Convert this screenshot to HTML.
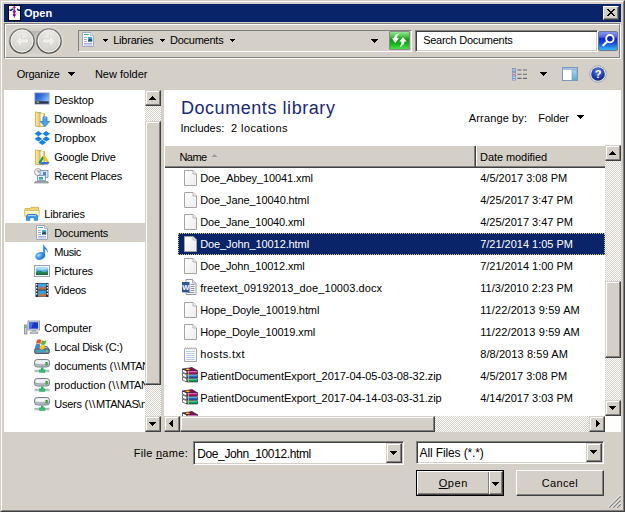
<!DOCTYPE html>
<html><head><meta charset="utf-8"><title>Open</title>
<style>
*{box-sizing:border-box;margin:0;padding:0}
html,body{width:625px;height:512px;overflow:hidden;background:#d4d0c8}
body{font-family:"Liberation Sans",sans-serif;font-size:11px;color:#000;position:relative}
.a{position:absolute}
.t{position:absolute;white-space:nowrap;line-height:13px;font-size:11px}
.btn{position:absolute;background:#d4d0c8;border:1px solid;border-color:#fff #404040 #404040 #fff;box-shadow:inset -1px -1px 0 #808080}
.sb{position:absolute;background:#d4d0c8;border:1px solid;border-color:#d4d0c8 #404040 #404040 #d4d0c8;box-shadow:inset -1px -1px 0 #808080, inset 1px 1px 0 #fff}
.sunk{position:absolute;border:1px solid;border-color:#808080 #fff #fff #808080;box-shadow:inset 1px 1px 0 #404040, inset -1px -1px 0 #d4d0c8}
.sunk1{position:absolute;border:1px solid;border-color:#808080 #fff #fff #808080}
.dith{position:absolute;background-color:#fff;background-image:conic-gradient(#d4d0c8 25%,#fff 0 50%,#d4d0c8 0 75%,#fff 0);background-size:2px 2px}
.ad{position:absolute;width:0;height:0;border-style:solid;border-color:#000 transparent transparent transparent}
.au{position:absolute;width:0;height:0;border-style:solid;border-color:transparent transparent #000 transparent}
.al{position:absolute;width:0;height:0;border-style:solid;border-color:transparent #000 transparent transparent}
.ar{position:absolute;width:0;height:0;border-style:solid;border-color:transparent transparent transparent #000}
svg{position:absolute;overflow:visible}
</style></head><body>
<div class="a" style="left:0px;top:0px;width:625px;height:512px;border:1px solid;border-color:#d4d0c8 #404040 #404040 #d4d0c8"></div>
<div class="a" style="left:1px;top:1px;width:623px;height:510px;border:1px solid;border-color:#fff #808080 #808080 #fff"></div>
<div class="a" style="left:4px;top:4px;width:617px;height:18px;background:#0a246a"></div>
<div class="t" style="left:24px;top:6px;color:#fff;font-weight:bold;font-size:11px;line-height:14px">Open</div>
<div class="a" style="left:8px;top:5px;width:13px;height:16px;background:#fff;border:1px solid #000;border-left-width:1.5px"></div>
<svg style="left:8px;top:5px" width="13" height="16" viewBox="0 0 13 16"><path d="M1.5 5.200h1.500l1.200-1h1.300M12 5.200h-1.500l-1.200-1H9" stroke="#0a246a" stroke-width="1.500" fill="none"/><path d="M6.300 1v11.500M4.800 2.300h3" stroke="#a000a0" stroke-width="1"/><circle cx="6.300" cy="6.600" r="1.500" fill="#a000a0"/><circle cx="6.300" cy="9.700" r="1.500" fill="#a000a0"/></svg>
<div class="btn" style="left:603px;top:6px;width:16px;height:14px;"></div>
<svg style="left:607px;top:9px" width="8" height="7" viewBox="0 0 8 7" shape-rendering="crispEdges" fill="#000"><rect x="0" y="0" width="2" height="1"/><rect x="6" y="0" width="2" height="1"/><rect x="1" y="1" width="2" height="1"/><rect x="5" y="1" width="2" height="1"/><rect x="2" y="2" width="4" height="1"/><rect x="3" y="3" width="2" height="1"/><rect x="2" y="4" width="4" height="1"/><rect x="1" y="5" width="2" height="1"/><rect x="5" y="5" width="2" height="1"/><rect x="0" y="6" width="2" height="1"/><rect x="6" y="6" width="2" height="1"/></svg>
<div class="a" style="left:4px;top:23px;width:617px;height:36px;border:1px solid;border-color:#808080 #fff #fff #808080"></div>
<div class="a" style="left:5px;top:24px;width:615px;height:34px;border:1px solid;border-color:#fff #808080 #808080 #fff"></div>
<svg style="left:8px;top:28px" width="54" height="26" viewBox="0 0 54 26"><defs><linearGradient id="pl" x1="0" y1="0" x2="0" y2="1"><stop offset="0" stop-color="#b8b6b0"/><stop offset="0.400" stop-color="#cac8c2"/><stop offset="1" stop-color="#d2cec6"/></linearGradient></defs><rect x="13" y="3" width="28" height="20" fill="url(#pl)"/><rect x="-1" y="-1" width="56" height="28" rx="14" fill="none" stroke="#e2e0da" stroke-width="1"/></svg>
<svg style="left:8.7px;top:28.2px" width="26" height="26" viewBox="0 0 26 26"><defs><radialGradient id="g1" cx="50%" cy="30%" r="70%"><stop offset="0" stop-color="#eeedea"/><stop offset="0.600" stop-color="#dddbd6"/><stop offset="1" stop-color="#cdcbc5"/></radialGradient><linearGradient id="r1" x1="0" y1="0" x2="0" y2="1"><stop offset="0" stop-color="#808080"/><stop offset="1" stop-color="#4c4c4c"/></linearGradient></defs><circle cx="13" cy="13" r="12.100" fill="url(#g1)" stroke="url(#r1)" stroke-width="1.350"/><circle cx="13" cy="13" r="10.900" fill="none" stroke="#f6f6f4" stroke-width="1" opacity="0.800"/><path d="M6.500 13l6-6v3.800h7v4.400h-7v3.800z" fill="#f0efec" stroke="#d0cec8" stroke-width="0.700"/></svg>
<svg style="left:36.3px;top:28.2px" width="26" height="26" viewBox="0 0 26 26"><defs><radialGradient id="g2" cx="50%" cy="30%" r="70%"><stop offset="0" stop-color="#eeedea"/><stop offset="0.600" stop-color="#dddbd6"/><stop offset="1" stop-color="#cdcbc5"/></radialGradient><linearGradient id="r2" x1="0" y1="0" x2="0" y2="1"><stop offset="0" stop-color="#808080"/><stop offset="1" stop-color="#4c4c4c"/></linearGradient></defs><circle cx="13" cy="13" r="12.100" fill="url(#g2)" stroke="url(#r2)" stroke-width="1.350"/><circle cx="13" cy="13" r="10.900" fill="none" stroke="#f6f6f4" stroke-width="1" opacity="0.800"/><path d="M19.500 13l-6-6v3.800h-7v4.400h7v3.800z" fill="#f0efec" stroke="#d0cec8" stroke-width="0.700"/></svg>
<div class="sunk1" style="left:78px;top:30px;width:334px;height:22px;"></div>
<svg style="left:82px;top:32px" width="12" height="15" viewBox="0 0 12 15"><path d="M0.500 0.500h8l3 3v11h-11z" fill="#fff" stroke="#9aa0b4" stroke-width="0.900"/><path d="M8.500 0.500v3h3" fill="#eceef4" stroke="#9aa0b4" stroke-width="0.700"/><path d="M2 2.500h5" stroke="#48a898" stroke-width="1"/><path d="M2 5.500h3M2 7.500h3M2 9.500h3M2 11.500h8M2 13h8" stroke="#8498e4" stroke-width="0.800"/><rect x="6" y="5" width="4.200" height="4.500" fill="#4c9ce0"/><path d="M6 8l2-1.200 2.200 0.800v1.900h-4.200z" fill="#245c50"/></svg>
<svg style="left:103px;top:39px" width="5" height="3" viewBox="0 0 5 3" shape-rendering="crispEdges" fill="#000"><rect x="0" y="0" width="5" height="1"/><rect x="1" y="1" width="3" height="1"/><rect x="2" y="2" width="1" height="1"/></svg>
<div class="t" style="left:113.2px;top:34px;letter-spacing:-0.221px;">Libraries</div>
<svg style="left:160px;top:39px" width="5" height="3" viewBox="0 0 5 3" shape-rendering="crispEdges" fill="#000"><rect x="0" y="0" width="5" height="1"/><rect x="1" y="1" width="3" height="1"/><rect x="2" y="2" width="1" height="1"/></svg>
<div class="t" style="left:170.0px;top:34px;letter-spacing:-0.249px;">Documents</div>
<svg style="left:230px;top:39px" width="5" height="3" viewBox="0 0 5 3" shape-rendering="crispEdges" fill="#000"><rect x="0" y="0" width="5" height="1"/><rect x="1" y="1" width="3" height="1"/><rect x="2" y="2" width="1" height="1"/></svg>
<svg style="left:371px;top:39px" width="7" height="4" viewBox="0 0 7 4" shape-rendering="crispEdges" fill="#000"><rect x="0" y="0" width="7" height="1"/><rect x="1" y="1" width="5" height="1"/><rect x="2" y="2" width="3" height="1"/><rect x="3" y="3" width="1" height="1"/></svg>
<svg style="left:389px;top:31px" width="21" height="19" viewBox="0 0 21 19"><defs><linearGradient id="gr" x1="0" y1="0" x2="0" y2="1"><stop offset="0" stop-color="#90e890"/><stop offset="0.300" stop-color="#3cbc3c"/><stop offset="0.450" stop-color="#0c9a14"/><stop offset="0.700" stop-color="#18b41c"/><stop offset="1" stop-color="#48e048"/></linearGradient></defs><rect x="0" y="0" width="21" height="19" rx="1.500" fill="#848c88"/><rect x="1" y="1" width="19" height="17" rx="0.800" fill="url(#gr)"/><path d="M9.400 2.200Q5.400 3.600 4.900 7.300L2.900 7.300 6.300 12 10.100 7.300 7.900 7.300Q8 4.600 9.800 3z" fill="#fff"/><path d="M14 6.300L17.700 10.600 15.500 10.600Q15.400 14.300 10.700 16.300 12.600 13.500 12.400 10.600L10.200 10.600z" fill="#f8f8f2"/></svg>
<div class="sunk" style="left:415px;top:30px;width:183px;height:22px;background:#fff"></div>
<div class="t" style="left:423.2px;top:34px;letter-spacing:-0.265px;">Search Documents</div>
<svg style="left:598px;top:31px" width="20" height="20" viewBox="0 0 20 20"><defs><linearGradient id="gs" x1="0" y1="0" x2="0" y2="1"><stop offset="0" stop-color="#8c9cf4"/><stop offset="0.3" stop-color="#5060e8"/><stop offset="0.36" stop-color="#1028c8"/><stop offset="0.6" stop-color="#1448d8"/><stop offset="1" stop-color="#38c0f8"/></linearGradient></defs><rect x="0.5" y="0.5" width="19" height="19" rx="1.5" fill="url(#gs)" stroke="#707890"/><circle cx="11.900" cy="7.700" r="3.700" fill="#0a20c0" stroke="#fff" stroke-width="1.900"/><path d="M9.200 10.400L5.300 14.300" stroke="#fff" stroke-width="2.100" stroke-linecap="round"/></svg>
<div class="t" style="left:16.7px;top:68px;letter-spacing:-0.218px;">Organize</div>
<svg style="left:68px;top:72px" width="7" height="4" viewBox="0 0 7 4" shape-rendering="crispEdges" fill="#000"><rect x="0" y="0" width="7" height="1"/><rect x="1" y="1" width="5" height="1"/><rect x="2" y="2" width="3" height="1"/><rect x="3" y="3" width="1" height="1"/></svg>
<div class="t" style="left:94.9px;top:68px;letter-spacing:0.002px;">New folder</div>
<svg style="left:511.5px;top:67.5px" width="16" height="13" viewBox="0 0 16 13"><g fill="#fff" stroke="#7890c0" stroke-width="0.800"><rect x="0.400" y="0.400" width="3.200" height="3.200"/><rect x="0.400" y="4.600" width="3.200" height="3.200"/><rect x="0.400" y="8.800" width="3.200" height="3.200"/></g><rect x="1.300" y="5.500" width="1.400" height="1.400" fill="#e02020"/><rect x="1.300" y="1.300" width="1.400" height="1.400" fill="#3878d8"/><rect x="1.300" y="9.700" width="1.400" height="1.400" fill="#3878d8"/><path d="M5.500 2h4M11 2h4M5.500 6.200h4M11 6.200h4M5.500 10.400h4M11 10.400h4" stroke="#686870" stroke-width="1.100"/></svg>
<svg style="left:540px;top:72px" width="7" height="4" viewBox="0 0 7 4" shape-rendering="crispEdges" fill="#000"><rect x="0" y="0" width="7" height="1"/><rect x="1" y="1" width="5" height="1"/><rect x="2" y="2" width="3" height="1"/><rect x="3" y="3" width="1" height="1"/></svg>
<svg style="left:562px;top:67px" width="16" height="14" viewBox="0 0 16 14"><defs><linearGradient id="gp" x1="0" y1="0" x2="0" y2="1"><stop offset="0" stop-color="#a8dcec"/><stop offset="1" stop-color="#58a8c8"/></linearGradient></defs><rect x="0.5" y="0.5" width="15" height="13" fill="#fff" stroke="#7c98bc"/><rect x="1" y="1" width="14" height="2" fill="#a8c0e0"/><rect x="10" y="3" width="5" height="10.5" fill="url(#gp)" stroke="#7c98bc" stroke-width="0.6"/></svg>
<svg style="left:589px;top:65px" width="18" height="18" viewBox="0 0 18 18"><defs><radialGradient id="gh" cx="50%" cy="30%" r="70%"><stop offset="0" stop-color="#6888e0"/><stop offset="0.6" stop-color="#2040b0"/><stop offset="1" stop-color="#102880"/></radialGradient></defs><circle cx="9" cy="9" r="8.3" fill="#e8e8e8" stroke="#9098a8" stroke-width="0.8"/><circle cx="9" cy="9" r="6.8" fill="url(#gh)"/><text x="9" y="13" font-family="Liberation Sans,sans-serif" font-weight="bold" font-size="11" fill="#fff" text-anchor="middle">?</text></svg>
<div class="a" style="left:4px;top:90px;width:141px;height:342px;background:#fff"></div>
<div class="dith" style="left:145px;top:90px;width:16px;height:342px;"></div>
<div class="sb" style="left:145px;top:90px;width:16px;height:16px;"></div>
<svg style="left:149px;top:96px" width="7" height="4" viewBox="0 0 7 4" shape-rendering="crispEdges" fill="#000"><rect x="3" y="0" width="1" height="1"/><rect x="2" y="1" width="3" height="1"/><rect x="1" y="2" width="5" height="1"/><rect x="0" y="3" width="7" height="1"/></svg>
<div class="sb" style="left:145px;top:121px;width:16px;height:264px;"></div>
<div class="sb" style="left:145px;top:416px;width:16px;height:16px;"></div>
<svg style="left:149px;top:422px" width="7" height="4" viewBox="0 0 7 4" shape-rendering="crispEdges" fill="#000"><rect x="0" y="0" width="7" height="1"/><rect x="1" y="1" width="5" height="1"/><rect x="2" y="2" width="3" height="1"/><rect x="3" y="3" width="1" height="1"/></svg>
<div class="a" style="left:5px;top:223px;width:140px;height:19px;background:#d4d0c8"></div>
<svg style="left:34px;top:92px" width="16" height="16" viewBox="0 0 16 16"><defs><linearGradient id="gd" x1="0" y1="0" x2="1" y2="0.600"><stop offset="0" stop-color="#1c48c8"/><stop offset="0.500" stop-color="#3c78e0"/><stop offset="1" stop-color="#8cc0f4"/></linearGradient></defs><rect x="0.500" y="0.500" width="15" height="12" fill="#8c9cbc"/><rect x="1.300" y="1.300" width="13.400" height="10.400" fill="url(#gd)"/><rect x="1.300" y="9.300" width="13.400" height="2.400" fill="#2c3448"/><rect x="2" y="8.300" width="1.500" height="1.500" fill="#e84830"/><rect x="3.300" y="8.800" width="1.300" height="1.300" fill="#48c048"/><rect x="2.300" y="9.800" width="1.300" height="1.200" fill="#3888f0"/><rect x="3.500" y="10" width="1.200" height="1.100" fill="#f8d030"/></svg>
<div class="t" style="left:54.3px;top:94px;letter-spacing:-0.137px;">Desktop</div>
<svg style="left:34px;top:111px" width="16" height="16" viewBox="0 0 16 16"><defs><linearGradient id="gf1" x1="0" y1="0" x2="1" y2="0"><stop offset="0" stop-color="#f8eaa8"/><stop offset="1" stop-color="#e8c860"/></linearGradient></defs><path d="M2 1.500h5l0.800 1h2.700v13h-8.500z" fill="#dcb850" stroke="#c0a040" stroke-width="0.700"/><path d="M6 2.500l3.500-0.500v12.500l-3.500 1z" fill="#fffbe4" stroke="#d8c890" stroke-width="0.400"/><path d="M1.500 0.800l4.500 1.200v14l-4.500-0.800z" fill="url(#gf1)" stroke="#c8a848" stroke-width="0.700"/><path d="M9 6h4v4.500h2.600l-4.600 5.200-4.600-5.200h2.600z" fill="#48a4ec" stroke="#2478c8" stroke-width="0.800" stroke-linejoin="round"/><path d="M9.800 6.800h2.400" stroke="#a8d8f8" stroke-width="0.800"/></svg>
<div class="t" style="left:54.3px;top:113px;letter-spacing:-0.202px;">Downloads</div>
<svg style="left:34px;top:130px" width="16" height="16" viewBox="0 0 16 16"><g fill="#1581e6" transform="translate(0,0.800)"><path d="M4.400 0.300l3.900 2.600-3.900 2.600-3.900-2.600z"/><path d="M12.200 0.300l3.900 2.600-3.900 2.600-3.900-2.600z"/><path d="M4.400 5.500l3.900 2.600-3.900 2.600-3.900-2.600z"/><path d="M12.200 5.500l3.900 2.600-3.900 2.600-3.900-2.600z"/><path d="M8.300 9l3.900 2.600-3.900 2.600-3.900-2.600z"/></g></svg>
<div class="t" style="left:54.3px;top:132px;letter-spacing:-0.040px;">Dropbox</div>
<svg style="left:34px;top:149px" width="16" height="16" viewBox="0 0 16 16"><defs><linearGradient id="gf2" x1="0" y1="0" x2="1" y2="0"><stop offset="0" stop-color="#f8eaa8"/><stop offset="1" stop-color="#e8c860"/></linearGradient></defs><path d="M2 1.500h5l0.800 1h2.700v13h-8.500z" fill="#dcb850" stroke="#c0a040" stroke-width="0.700"/><path d="M6 2.500l3.500-0.500v12.500l-3.500 1z" fill="#fffbe4" stroke="#d8c890" stroke-width="0.400"/><path d="M1.500 0.800l4.500 1.200v14l-4.500-0.800z" fill="url(#gf2)" stroke="#c8a848" stroke-width="0.700"/><path d="M8.500 7l-4 6.500 1.500 2 4-6.500z" fill="#1e9a50"/><path d="M8.500 7h3l4 6.500h-3z" fill="#f8c820"/><path d="M6 15.500l1.500-2.500h8l-1.500 2.500z" fill="#3a70e0"/></svg>
<div class="t" style="left:54.3px;top:151px;letter-spacing:-0.234px;">Google Drive</div>
<svg style="left:34px;top:168px" width="16" height="16" viewBox="0 0 16 16"><circle cx="4" cy="4" r="3.500" fill="#f4f4f4" stroke="#8890a0" stroke-width="0.8"/><path d="M4 2v2h1.500" stroke="#506080" stroke-width="0.7" fill="none"/><rect x="6" y="2.500" width="8" height="7" fill="#d8e4f4" stroke="#7888a8" stroke-width="0.8"/><rect x="9" y="4" width="3" height="3" fill="#4888d8"/><rect x="3.500" y="7.500" width="8" height="5" fill="#e8eef8" stroke="#7888a8" stroke-width="0.8"/><rect x="5" y="9" width="4" height="2.500" fill="#38a8a0"/><path d="M1.500 13.500h12l1 1.500h-14z" fill="#a8b0b8" stroke="#70787f" stroke-width="0.6"/></svg>
<div class="t" style="left:54.3px;top:170px;letter-spacing:-0.249px;">Recent Places</div>
<svg style="left:24px;top:206px" width="16" height="16" viewBox="0 0 16 16"><path d="M1 2.500h5l1-1.200h7.500v8h-13.500z" fill="#f0d47c" stroke="#d0ac48" stroke-width="0.800"/><path d="M0.500 4.500h15l-0.500 6h-14z" fill="#fbf0b8" stroke="#d8b850" stroke-width="0.800"/><path d="M1.500 5.500h13" stroke="#fffce8" stroke-width="1"/><path d="M2.500 14.300v-3.800q0-2 2-2h7q2 0 2 2v3.800h-3.200v-2.600h-4.600v2.600z" fill="#3c9ce8" stroke="#2078c0" stroke-width="0.800"/><path d="M4 9.500h8" stroke="#a0d4f8" stroke-width="1"/></svg>
<div class="t" style="left:44.3px;top:208px;letter-spacing:-0.188px;">Libraries</div>
<svg style="left:36px;top:225px" width="16" height="16" viewBox="0 0 16 16"><path d="M0.500 0.500h8l3 3v11h-11z" fill="#fff" stroke="#9aa0b4" stroke-width="0.900"/><path d="M8.500 0.500v3h3" fill="#eceef4" stroke="#9aa0b4" stroke-width="0.700"/><path d="M2 2.500h5" stroke="#48a898" stroke-width="1"/><path d="M2 5.500h3M2 7.500h3M2 9.500h3M2 11.500h8M2 13h8" stroke="#8498e4" stroke-width="0.800"/><rect x="6" y="5" width="4.200" height="4.500" fill="#4c9ce0"/><path d="M6 8l2-1.200 2.200 0.800v1.900h-4.200z" fill="#245c50"/></svg>
<div class="t" style="left:54.3px;top:227px;letter-spacing:-0.205px;">Documents</div>
<svg style="left:34px;top:244px" width="16" height="16" viewBox="0 0 16 16"><defs><radialGradient id="gm" cx="35%" cy="35%" r="70%"><stop offset="0" stop-color="#b8e0ff"/><stop offset="0.500" stop-color="#3c9cf0"/><stop offset="1" stop-color="#1868c8"/></radialGradient></defs><path d="M9.200 0.500v11.500h1.700v-7q2 1 2.300 2.500t-0.700 3q2-2.500 1-4.500t-2.600-3.200q-1-0.900-1-2.300z" fill="#2484e0"/><ellipse cx="6.200" cy="12" rx="4.600" ry="3.400" fill="url(#gm)" stroke="#1c6cc4" stroke-width="0.500" transform="rotate(-15 6.200 12)"/></svg>
<div class="t" style="left:54.3px;top:246px;letter-spacing:-0.427px;">Music</div>
<svg style="left:34px;top:263px" width="16" height="16" viewBox="0 0 16 16"><rect x="0.500" y="2.500" width="15" height="11" fill="#f8f8f8" stroke="#9098a0" stroke-width="0.9"/><rect x="2" y="4" width="12" height="8" fill="#58b0e8"/><path d="M2 9q3-2 6-0.500t6-1v4.500h-12z" fill="#2a8858"/><path d="M2 10.500h12v1.500h-12z" fill="#1a6848"/><path d="M2 4h12v2q-6 2-12 0z" fill="#a8dcf8"/></svg>
<div class="t" style="left:54.3px;top:265px;letter-spacing:-0.131px;">Pictures</div>
<svg style="left:34px;top:282px" width="16" height="16" viewBox="0 0 16 16"><rect x="1.500" y="1" width="13" height="14" fill="#303038"/><rect x="4" y="1.500" width="8" height="6" fill="#48a0e0"/><rect x="4" y="8.500" width="8" height="6" fill="#38a0d8"/><path d="M4 7.500l3-3 2 2 3-2.500v3.500z" fill="#c86030"/><path d="M4 14.500l3-3 2 1.500 3-2v3.500z" fill="#d07038"/><g fill="#e8f8f0"><rect x="2" y="2" width="1.300" height="1.500"/><rect x="2" y="5" width="1.300" height="1.500"/><rect x="2" y="8" width="1.300" height="1.500"/><rect x="2" y="11" width="1.300" height="1.500"/><rect x="12.700" y="2" width="1.300" height="1.500"/><rect x="12.700" y="5" width="1.300" height="1.500"/><rect x="12.700" y="8" width="1.300" height="1.500"/><rect x="12.700" y="11" width="1.300" height="1.500"/></g></svg>
<div class="t" style="left:54.3px;top:284px;letter-spacing:-0.290px;">Videos</div>
<svg style="left:24px;top:320px" width="16" height="16" viewBox="0 0 16 16"><rect x="0.500" y="5" width="2.500" height="9" fill="#c8ccd0" stroke="#70787f" stroke-width="0.700"/><rect x="1" y="6.500" width="1.200" height="1.500" fill="#40c040"/><rect x="4" y="1" width="11.500" height="9" fill="#e8eaf0" stroke="#8088a0" stroke-width="0.800"/><rect x="5.200" y="2.200" width="9" height="6.500" fill="#1838c0"/><path d="M5.200 2.200h4l-2 6.500h-2z" fill="#4870e8"/><path d="M8 10.500h4v1.500h2v1.500h-8v-1.500h2z" fill="#c0c4c8" stroke="#808890" stroke-width="0.500"/></svg>
<div class="t" style="left:44.3px;top:322px;letter-spacing:-0.087px;">Computer</div>
<svg style="left:34px;top:339px" width="16" height="16" viewBox="0 0 16 16"><path d="M1 10l2-2.500h10l2 2.500v4h-14z" fill="#a8b4c0" stroke="#4c5864" stroke-width="0.800"/><rect x="0.800" y="9.800" width="14.400" height="4.700" rx="1" fill="#6c88a4" stroke="#3c4c5c" stroke-width="0.800"/><rect x="2.500" y="11.300" width="8" height="1.600" fill="#38a8d0"/><rect x="12" y="11.300" width="1.700" height="1.600" fill="#58e858"/><path d="M3 1q2.200-1.400 4.400 0l-1 4q-2.200-1.400-4.400 0z" fill="#e85028"/><path d="M7.900 1.300q2.200 1.400 4.400 0l-1 4q-2.200 1.400-4.400 0z" fill="#58b830"/><path d="M1.800 5.500q2.200-1.400 4.400 0l-1 4q-2.200-1.400-4.400 0z" fill="#3888e0"/><path d="M6.700 5.800q2.200 1.400 4.400 0l-1 4q-2.200 1.400-4.400 0z" fill="#f8c820"/></svg>
<div class="t" style="left:54.3px;top:341px;letter-spacing:-0.248px;">Local Disk (C:)</div>
<div class="a" style="left:4px;top:355px;width:141px;height:60px;overflow:hidden">
<div class="t" style="left:50.3px;top:5px;letter-spacing:-0.157px;">documents</div>
<div class="t" style="left:105.4px;top:5px;letter-spacing:0.606px;">(\\</div>
<div class="t" style="left:117.0px;top:5px;letter-spacing:-0.455px;">MTANAS</div>
<div class="t" style="left:159.5px;top:5px;letter-spacing:0.128px;">)</div>
<div class="t" style="left:50.3px;top:24px;letter-spacing:-0.018px;">production</div>
<div class="t" style="left:103.9px;top:24px;letter-spacing:0.740px;">(\\</div>
<div class="t" style="left:115.9px;top:24px;letter-spacing:-0.455px;">MTANAS</div>
<div class="t" style="left:158.4px;top:24px;letter-spacing:0.128px;">)</div>
<div class="t" style="left:50.3px;top:43px;letter-spacing:-0.267px;">Users</div>
<div class="t" style="left:80.4px;top:43px;letter-spacing:0.606px;">(\\</div>
<div class="t" style="left:92.0px;top:43px;letter-spacing:-0.455px;">MTANAS</div>
<div class="t" style="left:133.7px;top:43px;letter-spacing:0.937px;">\</div>
<div class="t" style="left:136.9px;top:43px;letter-spacing:-0.576px;">netshare)</div>
</div>
<svg style="left:34px;top:358px" width="16" height="16" viewBox="0 0 16 16"><rect x="0.500" y="1.500" width="15" height="7.500" rx="2.800" fill="#c4cad0" stroke="#6c747c" stroke-width="0.900"/><rect x="1.300" y="2.200" width="13.400" height="3.600" rx="1.800" fill="#f2f4f6"/><path d="M1.500 6.500q6.500 1.500 13 0" stroke="#8c949c" stroke-width="0.700" fill="none"/><rect x="11.800" y="4.300" width="1.800" height="3" fill="#38c838" stroke="#208020" stroke-width="0.400"/><path d="M7 9.500h2.500v2.500h-2.500z" fill="#28b868"/><path d="M0.500 13.200h15" stroke="#b8c4c4" stroke-width="2.200"/><path d="M0.500 12.200h15" stroke="#8c9898" stroke-width="0.500"/><path d="M5.500 11.800h5.500v2.700h-5.500z" fill="#30c474" stroke="#209050" stroke-width="0.400"/></svg>
<svg style="left:34px;top:377px" width="16" height="16" viewBox="0 0 16 16"><rect x="0.500" y="1.500" width="15" height="7.500" rx="2.800" fill="#c4cad0" stroke="#6c747c" stroke-width="0.900"/><rect x="1.300" y="2.200" width="13.400" height="3.600" rx="1.800" fill="#f2f4f6"/><path d="M1.500 6.500q6.500 1.500 13 0" stroke="#8c949c" stroke-width="0.700" fill="none"/><rect x="11.800" y="4.300" width="1.800" height="3" fill="#38c838" stroke="#208020" stroke-width="0.400"/><path d="M7 9.500h2.500v2.500h-2.500z" fill="#28b868"/><path d="M0.500 13.200h15" stroke="#b8c4c4" stroke-width="2.200"/><path d="M0.500 12.200h15" stroke="#8c9898" stroke-width="0.500"/><path d="M5.500 11.800h5.500v2.700h-5.500z" fill="#30c474" stroke="#209050" stroke-width="0.400"/></svg>
<svg style="left:34px;top:396px" width="16" height="16" viewBox="0 0 16 16"><rect x="0.500" y="1.500" width="15" height="7.500" rx="2.800" fill="#c4cad0" stroke="#6c747c" stroke-width="0.900"/><rect x="1.300" y="2.200" width="13.400" height="3.600" rx="1.800" fill="#f2f4f6"/><path d="M1.500 6.500q6.500 1.500 13 0" stroke="#8c949c" stroke-width="0.700" fill="none"/><rect x="11.800" y="4.300" width="1.800" height="3" fill="#38c838" stroke="#208020" stroke-width="0.400"/><path d="M7 9.500h2.500v2.500h-2.500z" fill="#28b868"/><path d="M0.500 13.200h15" stroke="#b8c4c4" stroke-width="2.200"/><path d="M0.500 12.200h15" stroke="#8c9898" stroke-width="0.500"/><path d="M5.500 11.800h5.500v2.700h-5.500z" fill="#30c474" stroke="#209050" stroke-width="0.400"/></svg>
<div class="a" style="left:164px;top:90px;width:457px;height:342px;background:#fff"></div>
<div class="t" style="left:180.9px;top:97px;letter-spacing:0.562px;font-size:18px;line-height:22px;color:#1a2878">Documents library</div>
<div class="t" style="left:180.4px;top:122px;letter-spacing:-0.026px;">Includes:</div>
<div class="t" style="left:231.1px;top:122px;letter-spacing:0.391px;">2 locations</div>
<div class="t" style="left:468.8px;top:112px;letter-spacing:0.139px;">Arrange by:</div>
<div class="t" style="left:538.3px;top:112px;letter-spacing:-0.131px;">Folder</div>
<svg style="left:577px;top:115px" width="7" height="4" viewBox="0 0 7 4" shape-rendering="crispEdges" fill="#000"><rect x="0" y="0" width="7" height="1"/><rect x="1" y="1" width="5" height="1"/><rect x="2" y="2" width="3" height="1"/><rect x="3" y="3" width="1" height="1"/></svg>
<div class="a" style="left:165px;top:146px;width:440px;height:22px;background:#d4d0c8;border-bottom:1px solid #404040;box-shadow:inset 0 -1px 0 #808080"></div>
<div class="t" style="left:179.4px;top:151px;letter-spacing:-0.511px;">Name</div>
<svg style="left:212px;top:154px" width="5" height="3" viewBox="0 0 5 3" shape-rendering="crispEdges" fill="#9c9c9c"><rect x="2" y="0" width="1" height="1"/><rect x="1" y="1" width="3" height="1"/><rect x="0" y="2" width="5" height="1"/></svg>
<div class="a" style="left:474px;top:146px;width:1px;height:21px;background:#808080"></div>
<div class="a" style="left:475px;top:146px;width:1px;height:21px;background:#404040"></div>
<div class="a" style="left:476px;top:146px;width:1px;height:20px;background:#fff"></div>
<div class="t" style="left:480.0px;top:151px;letter-spacing:-0.067px;">Date modified</div>
<div class="dith" style="left:605px;top:145px;width:16px;height:271px;"></div>
<div class="sb" style="left:605px;top:145px;width:16px;height:16px;"></div>
<svg style="left:609px;top:151px" width="7" height="4" viewBox="0 0 7 4" shape-rendering="crispEdges" fill="#000"><rect x="3" y="0" width="1" height="1"/><rect x="2" y="1" width="3" height="1"/><rect x="1" y="2" width="5" height="1"/><rect x="0" y="3" width="7" height="1"/></svg>
<div class="sb" style="left:605px;top:281px;width:16px;height:77px;"></div>
<div class="sb" style="left:605px;top:400px;width:16px;height:16px;"></div>
<svg style="left:609px;top:406px" width="7" height="4" viewBox="0 0 7 4" shape-rendering="crispEdges" fill="#000"><rect x="0" y="0" width="7" height="1"/><rect x="1" y="1" width="5" height="1"/><rect x="2" y="2" width="3" height="1"/><rect x="3" y="3" width="1" height="1"/></svg>
<div class="dith" style="left:164px;top:416px;width:441px;height:16px;"></div>
<div class="sb" style="left:164px;top:416px;width:16px;height:16px;"></div>
<svg style="left:169px;top:420px" width="4" height="7" viewBox="0 0 4 7" shape-rendering="crispEdges" fill="#000"><rect x="0" y="3" width="1" height="1"/><rect x="1" y="2" width="1" height="3"/><rect x="2" y="1" width="1" height="5"/><rect x="3" y="0" width="1" height="7"/></svg>
<div class="sb" style="left:180px;top:416px;width:255px;height:16px;"></div>
<div class="sb" style="left:589px;top:416px;width:16px;height:16px;"></div>
<svg style="left:596px;top:420px" width="4" height="7" viewBox="0 0 4 7" shape-rendering="crispEdges" fill="#000"><rect x="0" y="0" width="1" height="7"/><rect x="1" y="1" width="1" height="5"/><rect x="2" y="2" width="1" height="3"/><rect x="3" y="3" width="1" height="1"/></svg>
<div class="a" style="left:164px;top:168px;width:441px;height:248px;overflow:hidden">
<svg style="left:20px;top:1.5px" width="13" height="16" viewBox="0 0 13 16"><defs><linearGradient id="gfi" x1="0" y1="0" x2="1" y2="1"><stop offset="0" stop-color="#ffffff"/><stop offset="1" stop-color="#ececec"/></linearGradient></defs><path d="M0.500 0.500h8.500l3.500 3.500v11.500h-12z" fill="url(#gfi)" stroke="#a4a4a4" stroke-width="1"/><path d="M9 0.500v3.500h3.500" fill="#f4f4f4" stroke="#a4a4a4" stroke-width="0.800"/></svg>
<div class="t" style="left:36.2px;top:4px;letter-spacing:-0.087px;">Doe_Abbey_10041.xml</div>
<div class="t" style="left:316.2px;top:4px;letter-spacing:0.010px;">4/5/2017 3:08 PM</div>
<svg style="left:20px;top:23.5px" width="13" height="16" viewBox="0 0 13 16"><defs><linearGradient id="gfi" x1="0" y1="0" x2="1" y2="1"><stop offset="0" stop-color="#ffffff"/><stop offset="1" stop-color="#ececec"/></linearGradient></defs><path d="M0.500 0.500h8.500l3.500 3.500v11.500h-12z" fill="url(#gfi)" stroke="#a4a4a4" stroke-width="1"/><path d="M9 0.500v3.500h3.500" fill="#f4f4f4" stroke="#a4a4a4" stroke-width="0.800"/></svg>
<div class="t" style="left:36.2px;top:26px;letter-spacing:-0.100px;">Doe_Jane_10040.html</div>
<div class="t" style="left:316.2px;top:26px;letter-spacing:-0.010px;">4/25/2017 3:47 PM</div>
<svg style="left:20px;top:45.5px" width="13" height="16" viewBox="0 0 13 16"><defs><linearGradient id="gfi" x1="0" y1="0" x2="1" y2="1"><stop offset="0" stop-color="#ffffff"/><stop offset="1" stop-color="#ececec"/></linearGradient></defs><path d="M0.500 0.500h8.500l3.500 3.500v11.500h-12z" fill="url(#gfi)" stroke="#a4a4a4" stroke-width="1"/><path d="M9 0.500v3.500h3.500" fill="#f4f4f4" stroke="#a4a4a4" stroke-width="0.800"/></svg>
<div class="t" style="left:36.2px;top:48px;letter-spacing:-0.141px;">Doe_Jane_10040.xml</div>
<div class="t" style="left:316.2px;top:48px;letter-spacing:-0.010px;">4/25/2017 3:47 PM</div>
<div class="a" style="left:14px;top:65px;width:427px;height:22px;background:#0a246a;border:1px dotted #d8c878"></div>
<svg style="left:20px;top:67.5px" width="13" height="16" viewBox="0 0 13 16"><defs><linearGradient id="gfi" x1="0" y1="0" x2="1" y2="1"><stop offset="0" stop-color="#ffffff"/><stop offset="1" stop-color="#ececec"/></linearGradient></defs><path d="M0.500 0.500h8.500l3.500 3.500v11.500h-12z" fill="url(#gfi)" stroke="#a4a4a4" stroke-width="1"/><path d="M9 0.500v3.500h3.500" fill="#f4f4f4" stroke="#a4a4a4" stroke-width="0.800"/></svg>
<div class="t" style="left:36.2px;top:70px;letter-spacing:-0.100px;color:#fff;">Doe_John_10012.html</div>
<div class="t" style="left:316.2px;top:70px;letter-spacing:-0.010px;color:#fff;">7/21/2014 1:05 PM</div>
<svg style="left:20px;top:89.5px" width="13" height="16" viewBox="0 0 13 16"><defs><linearGradient id="gfi" x1="0" y1="0" x2="1" y2="1"><stop offset="0" stop-color="#ffffff"/><stop offset="1" stop-color="#ececec"/></linearGradient></defs><path d="M0.500 0.500h8.500l3.500 3.500v11.500h-12z" fill="url(#gfi)" stroke="#a4a4a4" stroke-width="1"/><path d="M9 0.500v3.500h3.500" fill="#f4f4f4" stroke="#a4a4a4" stroke-width="0.800"/></svg>
<div class="t" style="left:36.2px;top:92px;letter-spacing:-0.141px;">Doe_John_10012.xml</div>
<div class="t" style="left:316.2px;top:92px;letter-spacing:-0.010px;">7/21/2014 1:00 PM</div>
<svg style="left:18px;top:111px" width="14" height="16" viewBox="0 0 14 16"><path d="M4 0.500h6.500l3.500 3.500v11.500h-10z" fill="#fdfdfd" stroke="#9098a8" stroke-width="1"/><path d="M10.500 0.500v3.500h3.500" fill="#eef0f4" stroke="#9098a8" stroke-width="0.800"/><path d="M8.500 5.500h4M8.500 7.500h4M8.500 9.500h4M8.500 11.500h4M5.500 13.500h7" stroke="#707888" stroke-width="0.800"/><rect x="0" y="3" width="7.500" height="10.300" fill="#2b579a"/><text x="3.750" y="11" font-family="Liberation Sans,sans-serif" font-size="7.500" font-weight="bold" fill="#fff" text-anchor="middle">W</text></svg>
<div class="t" style="left:36.2px;top:114px;letter-spacing:0.087px;">freetext_09192013_doe_10003.docx</div>
<div class="t" style="left:316.2px;top:114px;letter-spacing:0.038px;">11/3/2010 2:23 PM</div>
<svg style="left:20px;top:133.5px" width="13" height="16" viewBox="0 0 13 16"><defs><linearGradient id="gfi" x1="0" y1="0" x2="1" y2="1"><stop offset="0" stop-color="#ffffff"/><stop offset="1" stop-color="#ececec"/></linearGradient></defs><path d="M0.500 0.500h8.500l3.500 3.500v11.500h-12z" fill="url(#gfi)" stroke="#a4a4a4" stroke-width="1"/><path d="M9 0.500v3.500h3.500" fill="#f4f4f4" stroke="#a4a4a4" stroke-width="0.800"/></svg>
<div class="t" style="left:36.2px;top:136px;letter-spacing:-0.095px;">Hope_Doyle_10019.html</div>
<div class="t" style="left:316.2px;top:136px;letter-spacing:0.114px;">11/22/2013 9:59 AM</div>
<svg style="left:20px;top:155.5px" width="13" height="16" viewBox="0 0 13 16"><defs><linearGradient id="gfi" x1="0" y1="0" x2="1" y2="1"><stop offset="0" stop-color="#ffffff"/><stop offset="1" stop-color="#ececec"/></linearGradient></defs><path d="M0.500 0.500h8.500l3.500 3.500v11.500h-12z" fill="url(#gfi)" stroke="#a4a4a4" stroke-width="1"/><path d="M9 0.500v3.500h3.500" fill="#f4f4f4" stroke="#a4a4a4" stroke-width="0.800"/></svg>
<div class="t" style="left:36.2px;top:158px;letter-spacing:-0.131px;">Hope_Doyle_10019.xml</div>
<div class="t" style="left:316.2px;top:158px;letter-spacing:0.114px;">11/22/2013 9:59 AM</div>
<svg style="left:20px;top:177.5px" width="13" height="16" viewBox="0 0 13 16"><path d="M0.500 3.200q1-3 2 0q1-3 2 0q1-3 2 0q1-3 2 0q1-3 2 0q1-3 2 0v12.300h-12z" fill="#fdfdfd" stroke="#9a9a9a" stroke-width="0.900"/><path d="M2 5.500h9M2 7.500h9M2 9.500h9M2 11.500h9M2 13.500h9" stroke="#a8c0e0" stroke-width="0.800"/></svg>
<div class="t" style="left:36.2px;top:180px;letter-spacing:0.415px;">hosts.txt</div>
<div class="t" style="left:316.2px;top:180px;letter-spacing:0.092px;">8/8/2013 8:59 AM</div>
<svg style="left:18px;top:199px" width="16" height="16" viewBox="0 0 16 16"><g stroke="#181818" stroke-width="0.600" stroke-linejoin="round"><path d="M0.500 2.0L5 3.8v3.200L0.500 5.2z" fill="#fff"/><path d="M5 3.8h10.500v3.200h-10.500z" fill="#b81478"/><path d="M0.500 6.0L5 7.8v3.200L0.500 9.2z" fill="#fff"/><path d="M5 7.8h10.500v3.200h-10.500z" fill="#2464c4"/><path d="M0.500 10.0L5 11.8v3.200L0.500 13.2z" fill="#fff"/><path d="M5 11.8h10.500v3.200h-10.500z" fill="#14985a"/><path d="M0.500 2L10 0.500 15.500 3.800H5z" fill="#8c0c58"/></g><path d="M5.500 4.6h9.700" stroke="#f478c8" stroke-width="0.900"/><path d="M5.500 8.6h9.700" stroke="#70b0f8" stroke-width="0.900"/><path d="M5.500 12.6h9.700" stroke="#58d8a0" stroke-width="0.900"/><path d="M6.400 3.800v11.400" stroke="#d0c870" stroke-width="1" opacity="0.850"/><path d="M3.200 1.900l3.300-0.500 1.800 1.200-3.300 0.500z" fill="#e8e428"/></svg>
<div class="t" style="left:36.2px;top:202px;letter-spacing:-0.042px;">PatientDocumentExport_2017-04-05-03-08-32.zip</div>
<div class="t" style="left:316.2px;top:202px;letter-spacing:0.010px;">4/5/2017 3:08 PM</div>
<svg style="left:18px;top:221px" width="16" height="16" viewBox="0 0 16 16"><g stroke="#181818" stroke-width="0.600" stroke-linejoin="round"><path d="M0.500 2.0L5 3.8v3.200L0.500 5.2z" fill="#fff"/><path d="M5 3.8h10.500v3.200h-10.500z" fill="#b81478"/><path d="M0.500 6.0L5 7.8v3.200L0.500 9.2z" fill="#fff"/><path d="M5 7.8h10.500v3.200h-10.500z" fill="#2464c4"/><path d="M0.500 10.0L5 11.8v3.200L0.500 13.2z" fill="#fff"/><path d="M5 11.8h10.500v3.200h-10.500z" fill="#14985a"/><path d="M0.500 2L10 0.500 15.500 3.800H5z" fill="#8c0c58"/></g><path d="M5.500 4.6h9.700" stroke="#f478c8" stroke-width="0.900"/><path d="M5.500 8.6h9.700" stroke="#70b0f8" stroke-width="0.900"/><path d="M5.500 12.6h9.700" stroke="#58d8a0" stroke-width="0.900"/><path d="M6.400 3.800v11.400" stroke="#d0c870" stroke-width="1" opacity="0.850"/><path d="M3.200 1.900l3.300-0.500 1.800 1.200-3.300 0.500z" fill="#e8e428"/></svg>
<div class="t" style="left:36.2px;top:224px;letter-spacing:-0.042px;">PatientDocumentExport_2017-04-14-03-03-31.zip</div>
<div class="t" style="left:316.2px;top:224px;letter-spacing:-0.010px;">4/14/2017 3:03 PM</div>
<svg style="left:18px;top:243px" width="16" height="16" viewBox="0 0 16 16"><g stroke="#181818" stroke-width="0.600" stroke-linejoin="round"><path d="M0.500 2.0L5 3.8v3.200L0.500 5.2z" fill="#fff"/><path d="M5 3.8h10.500v3.200h-10.500z" fill="#b81478"/><path d="M0.500 6.0L5 7.8v3.200L0.500 9.2z" fill="#fff"/><path d="M5 7.8h10.500v3.200h-10.500z" fill="#2464c4"/><path d="M0.500 10.0L5 11.8v3.200L0.500 13.2z" fill="#fff"/><path d="M5 11.8h10.500v3.200h-10.500z" fill="#14985a"/><path d="M0.500 2L10 0.500 15.500 3.800H5z" fill="#8c0c58"/></g><path d="M5.500 4.6h9.700" stroke="#f478c8" stroke-width="0.900"/><path d="M5.500 8.6h9.700" stroke="#70b0f8" stroke-width="0.900"/><path d="M5.500 12.6h9.700" stroke="#58d8a0" stroke-width="0.900"/><path d="M6.400 3.800v11.400" stroke="#d0c870" stroke-width="1" opacity="0.850"/><path d="M3.200 1.900l3.300-0.500 1.800 1.200-3.300 0.500z" fill="#e8e428"/></svg>
<div class="t" style="left:36.2px;top:246px;letter-spacing:-0.042px;">PatientDocumentExport_2017-04-25-03-47-30.zip</div>
<div class="t" style="left:316.2px;top:246px;letter-spacing:-0.010px;">4/25/2017 3:47 PM</div>
</div>
<div class="t" style="left:133.7px;top:447px;letter-spacing:0.292px;">File <u>n</u>ame:</div>
<div class="sunk" style="left:193px;top:441px;width:211px;height:24px;background:#fff"></div>
<div class="t" style="left:197.2px;top:448px;letter-spacing:-0.372px;font-size:12px">Doe_John_10012.html</div>
<div class="sb" style="left:386px;top:443px;width:16px;height:20px;"></div>
<svg style="left:390px;top:451px" width="7" height="4" viewBox="0 0 7 4" shape-rendering="crispEdges" fill="#000"><rect x="0" y="0" width="7" height="1"/><rect x="1" y="1" width="5" height="1"/><rect x="2" y="2" width="3" height="1"/><rect x="3" y="3" width="1" height="1"/></svg>
<div class="sunk" style="left:416px;top:441px;width:188px;height:23px;background:#fff"></div>
<div class="t" style="left:419.6px;top:447px;letter-spacing:-0.128px;font-size:12px">All Files (*.*)</div>
<div class="sb" style="left:586px;top:443px;width:16px;height:19px;"></div>
<svg style="left:590px;top:450px" width="7" height="4" viewBox="0 0 7 4" shape-rendering="crispEdges" fill="#000"><rect x="0" y="0" width="7" height="1"/><rect x="1" y="1" width="5" height="1"/><rect x="2" y="2" width="3" height="1"/><rect x="3" y="3" width="1" height="1"/></svg>
<div class="a" style="left:416px;top:470px;width:88px;height:26px;border:1px solid #000"></div>
<div class="btn" style="left:417px;top:471px;width:86px;height:24px;"></div>
<div class="a" style="left:488px;top:472px;width:1px;height:22px;background:#808080"></div>
<div class="a" style="left:489px;top:472px;width:1px;height:22px;background:#fff"></div>
<svg style="left:492px;top:482px" width="7" height="4" viewBox="0 0 7 4" shape-rendering="crispEdges" fill="#000"><rect x="0" y="0" width="7" height="1"/><rect x="1" y="1" width="5" height="1"/><rect x="2" y="2" width="3" height="1"/><rect x="3" y="3" width="1" height="1"/></svg>
<div class="t" style="left:438.7px;top:477px;letter-spacing:0.595px;"><u>O</u>pen</div>
<div class="btn" style="left:516px;top:470px;width:88px;height:26px;"></div>
<div class="t" style="left:541.7px;top:477px;letter-spacing:0.375px;">Cancel</div>
<svg style="left:608px;top:495px" width="13" height="13" viewBox="0 0 13 13"><path d="M1 12.500L12.500 1M5 12.500L12.500 5M9 12.500L12.500 9" stroke="#7c7c7c" stroke-width="1.500"/><path d="M0 12.500L12.500 0M4 12.500L12.500 4M8 12.500L12.500 8" stroke="#fff" stroke-width="1"/></svg>
</body></html>
